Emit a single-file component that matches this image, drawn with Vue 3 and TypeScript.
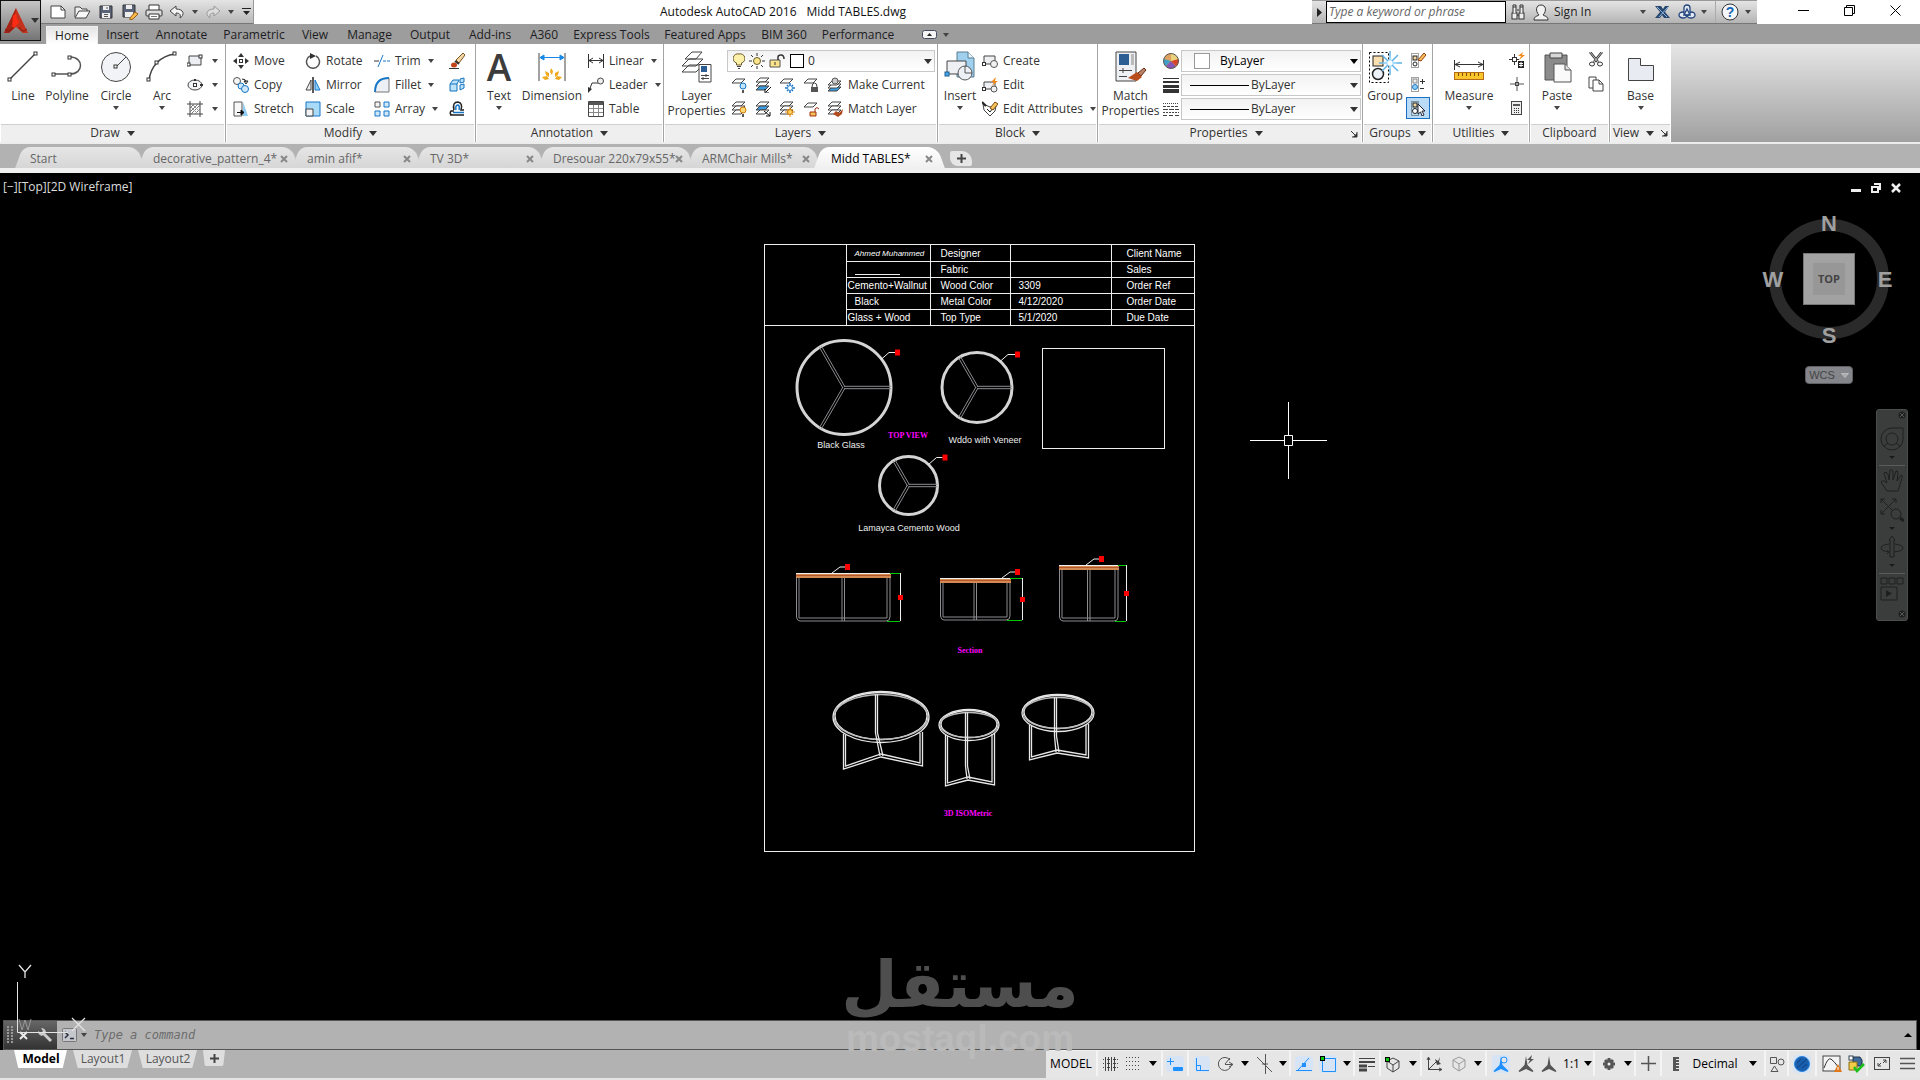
<script setup lang="ts">
import { h, ref } from 'vue'

type Glyph = [number, number, string]

const sq = (x: number, y: number) => `<rect x="${x}" y="${y}" width="3" height="3" fill="#fff" stroke="#333"/>`
const sheet = (y: number, fill = '#fff') => `<path d="M1 ${y + 4}L5 ${y}H14L10 ${y + 4}Z" fill="${fill}" stroke="#444"/>`
const annoFig = (c: string) => `<path d="M9 1l1.500 9 6 6-1 1-6.500-3-6.500 3-1-1 6-6z" fill="${c}"/>`

const glyphs: Record<string, Glyph> = {
  dn: [8, 5, '<path d="M0 0H8L4 5Z" fill="#333"/>'],
  sm: [6, 4, '<path d="M0 0H6L3 4Z" fill="#444"/>'],
  bk: [8, 5, '<path d="M0 0H8L4 5Z" fill="#000"/>'],
  logo: [24, 26, '<path d="M12 0L24 25H19L12 19 5 25H0Z" fill="#c4321e"/><path d="M12 0L10 20 5 25H0Z" fill="#a32415"/><path d="M9 8l3-3 1 6 2 3-4 5-3 1z" fill="#ff2a12"/><path d="M1 21q5 5 8-2M23 21q-5 5-8-2" stroke="#7e1a10" fill="none"/>'],
  new: [16, 14, '<path d="M1 1H11L15 5V13H1Z" fill="#fff" stroke="#444"/><path d="M11 1V5H15" fill="none" stroke="#444"/>'],
  open: [17, 14, '<path d="M1 12V2H6L8 4H13V6" fill="#eee" stroke="#444"/><path d="M1 13L5 6H16L12 13Z" fill="#f8f8f8" stroke="#444"/>'],
  save: [14, 14, '<path d="M1 1H13V13H1Z" fill="#5a6378" stroke="#333"/><path d="M4 1H10V5H4ZM3 8H11V13H3Z" fill="#eee"/><path d="M8 2v2M5 9.500h4M5 11.500h4" stroke="#555"/>'],
  saveas: [17, 16, '<path d="M1 1H13V13H1Z" fill="#5a6378" stroke="#333"/><path d="M4 1H10V5H4ZM3 8H11V13H3Z" fill="#eee"/><path d="M8 14L13 8 16 10 11 15 8 16Z" fill="#f6b94a" stroke="#9a5a10"/>'],
  print: [18, 16, '<path d="M4 6V1H14V6" fill="#fff" stroke="#333"/><rect x="1" y="6" width="16" height="6" rx="1" fill="#ddd" stroke="#333"/><path d="M4 10H14V15H4Z" fill="#fff" stroke="#333"/><path d="M6 12.500h6" stroke="#777"/>'],
  undo: [16, 14, '<path d="M7 1L1 6 7 11V8C11 8 12 10 11 13 16 10 15 4 7 4Z" fill="#f4f4f4" stroke="#444"/>'],
  redo: [16, 14, '<path d="M9 1L15 6 9 11V8C5 8 4 10 5 13 0 10 1 4 9 4Z" fill="#ddd" stroke="#999"/>'],
  qat: [9, 7, '<path d="M0 .5H9" stroke="#222"/><path d="M1 3H8L4.500 7Z" fill="#222"/>'],
  right: [5, 9, '<path d="M0 0L5 4.500 0 9Z" fill="#222"/>'],
  bino: [14, 16, '<g fill="#eee" stroke="#333"><rect x="1" y="9" width="5" height="6"/><rect x="8" y="9" width="5" height="6"/><path d="M2 9V3H5V9M9 9V3H12V9M2 3V1H5V3M9 3V1H12V3M6 6h2M6 11h2"/></g>'],
  user: [16, 17, '<path d="M1 16C1 12 5 12 6 11 2 7 3 1 8 1S14 7 10 11C11 12 15 12 15 16Z" fill="#f2f2f2" stroke="#333"/>'],
  xchg: [15, 14, '<path d="M0 1H6L8 4 10 1H14L10 7 15 13H9L7 10 5 13H0L5 7Z" fill="#27476e"/><path d="M2 2L12 12M13 2L4 12" stroke="#8fb5dd"/>'],
  a360: [18, 16, '<g fill="#e4e8f0" stroke="#23457e" stroke-width="1.300"><ellipse cx="5" cy="11" rx="4" ry="3"/><ellipse cx="13" cy="11" rx="4" ry="3"/><path d="M6 10V4Q6 1 9 1T12 4V10L9 12Z"/><path d="M9 5L12 11H6Z" fill="none"/></g>'],
  help: [18, 18, '<circle cx="9" cy="9" r="8" fill="#f4f6fa" stroke="#333"/><text x="9" y="14" text-anchor="middle" font-family="Liberation Sans" font-weight="700" font-size="14" fill="#1766b5">?</text>'],
  wmin: [11, 11, '<path d="M0 5.500H11" stroke="#000"/>'],
  wmax: [11, 11, '<path d="M.5 2.500H8.500V10.500H.5ZM2.500 2V.5H10.500V8.500H9" fill="none" stroke="#000"/>'],
  wclose: [11, 11, '<path d="M.5 .5L10.500 10.500M10.500 .5L.5 10.500" stroke="#000"/>'],
  ribmin: [15, 9, '<rect x=".5" y=".5" width="14" height="8" rx="2" fill="#f5f5f5" stroke="#444c60"/><path d="M5 6L7.500 3 10 6Z" fill="#222"/>'],
  line: [32, 32, `<path d="M3 28L28 3" stroke="#444" stroke-width="1.500"/>${sq(1, 27)}${sq(27, 1)}`],
  poly: [32, 32, `<path d="M3 23H19C33 23 33 6 19 6" fill="none" stroke="#555" stroke-width="1.500"/>${sq(1, 22)}${sq(17, 22)}${sq(17, 5)}`],
  circle: [32, 32, `<circle cx="16" cy="16" r="14.500" fill="#f1f3f7" stroke="#444"/><path d="M16 16L26 6" stroke="#444"/>${sq(14, 14)}`],
  arc: [32, 32, `<path d="M3 29C5 15 14 5 29 3" fill="none" stroke="#444" stroke-width="1.500"/>${sq(1, 27)}${sq(9, 10)}${sq(27, 1)}`],
  rect: [16, 16, `<path d="M2 3H14V12H2Z" fill="#eceef4" stroke="#444"/>${sq(0, 10)}${sq(12, 2)}`],
  ellipse: [16, 16, '<ellipse cx="8" cy="8" rx="7" ry="5" fill="#f1f3f7" stroke="#444"/><rect x="6.500" y="6.500" width="3" height="3" fill="#fff" stroke="#333"/><rect x="7" y="2" width="2" height="2" fill="#333"/><rect x="13" y="7" width="3" height="2" fill="#333"/>'],
  hatch: [16, 16, '<path d="M3 0V16M13 0V16M0 3H16M0 13H16" stroke="#444"/><path d="M3 7L7 3M3 11L11 3M4 13L13 4M8 13L13 8" stroke="#777"/><path d="M3 5L11 13M5 3L13 11" stroke="#999"/>'],
  move: [16, 16, '<path d="M8 0L11 4H5ZM8 16L5 12H11ZM0 8L4 5V11ZM16 8L12 11V5Z" fill="#333"/><rect x="6.500" y="6.500" width="3" height="3" fill="#fff" stroke="#333"/>'],
  rotate: [16, 16, '<path d="M5 3A6.500 6.500 0 1 0 11 3" fill="none" stroke="#555" stroke-width="1.500"/><path d="M5 0L11 3 5 6Z" fill="#333"/>'],
  trim: [16, 16, '<path d="M0 8H5" stroke="#333"/><path d="M4 14L9 2" stroke="#1677c8"/><path d="M9 8H16" stroke="#1677c8" stroke-dasharray="3 1"/>'],
  erase: [16, 16, '<path d="M0 15.500H10" stroke="#333"/><path d="M7 7L14 0 16 2 10 10Z" fill="#f3d6a5" stroke="#7a5320"/><ellipse cx="5" cy="12" rx="3" ry="2.500" fill="#c1431c"/><path d="M6 8L10 11" stroke="#333" stroke-width="2"/>'],
  copy: [16, 16, '<circle cx="4" cy="4" r="3.500" fill="#f5f5f5" stroke="#555"/><path d="M9 2Q13 2 13 5M11 4L13 7 15 4Z" fill="none" stroke="#222"/><circle cx="8" cy="9" r="3" fill="#cfe8fa" stroke="#1677c8"/><circle cx="12" cy="12" r="3.500" fill="#cfe8fa" stroke="#1677c8"/>'],
  mirror: [16, 16, '<path d="M8 0V16" stroke="#222" stroke-width="1.500"/><path d="M6 3V13H1Z" fill="#f0f0f4" stroke="#444"/><path d="M10 3V13H15Z" fill="#8fcdf5" stroke="#1677c8"/>'],
  fillet: [16, 16, '<path d="M1 15C1 6 6 1 15 1V15Z" fill="#edf0f5"/><path d="M1 15C1 6 6 1 15 1" stroke="#1677c8" stroke-width="2" fill="none"/><path d="M1 15H15V1" fill="none" stroke="#777"/>'],
  explode: [16, 16, '<g fill="#bce3fa" stroke="#1473bd"><path d="M1 7H8V14H1ZM1 7L4 3H10L8 7"/><path d="M11 2L15 1V5L11 6ZM11 8L15 7V11L11 13Z"/></g>'],
  stretch: [16, 16, '<path d="M10 1L15 15H10Z" fill="#8fcdf5"/><path d="M1 1H9V15H1Z" fill="#f8f8f8" stroke="#555"/><path d="M4 11.500H10M8 9L11 11.500 8 14Z" stroke="#111"/>'],
  scale: [16, 16, '<path d="M1 1H15V15H1Z" fill="#a9daf7" stroke="#1677c8"/><path d="M1 8H8V15H1Z" fill="#f4f4f6" stroke="#444"/>'],
  array: [16, 16, '<path d="M1 1H6V6H1Z" fill="#f5f5f5" stroke="#555"/><path d="M10 1H15V6H10ZM1 10H6V15H1ZM10 10H15V15H10Z" fill="#cfe8fa" stroke="#1677c8"/>'],
  offset: [16, 16, '<path d="M5 9Q3 1 9 1 14 2 12 9H15M1 14H15M3 14Q0 13 2 10H5" fill="none" stroke="#222" stroke-width="1.500"/><path d="M7 9Q6 4 9 4 11 5 10 9M4 11.500H15" fill="none" stroke="#1677c8" stroke-width="1.500"/>'],
  dim: [32, 32, '<path d="M3 2V30M29 2V30" stroke="#444"/><path d="M4 6.500H28M8 4L4 6.500 8 9ZM24 4L28 6.500 24 9Z" stroke="#1688e6" fill="#1688e6"/><path d="M15 17l2 3-1 4-2-3zM9 20l4 2v4l-3-2zM23 20l-4 2v4l3-2zM6 26l5-1 2 3-4 1zM26 26l-5-1-2 3 4 1z" fill="#f0a81c"/>'],
  linear: [16, 16, '<path d="M.5 1V15M15.500 1V15M1 7.500H15M5 5L1 7.500 5 10M11 5L15 7.500 11 10" fill="none" stroke="#333"/>'],
  leader: [16, 16, '<path d="M1 14L4 6H10" fill="none" stroke="#333"/><path d="M0 16V10L4 12Z" fill="#333"/><circle cx="12.500" cy="4" r="3" fill="#f0f0f0" stroke="#444"/>'],
  table: [16, 16, '<path d="M.5 .5H15.500V15.500H.5Z" fill="#fff" stroke="#444"/><path d="M1 1H15V4H1Z" fill="#555"/><path d="M1 7.500H15M1 11.500H15M5.500 4V15M10.500 4V15" stroke="#888"/>'],
  layers: [32, 32, '<g fill="#fff" stroke="#444"><path d="M1 21L8 14H22L15 21ZM1 15L8 8H22L15 15ZM4 8L11 1H21L15 8Z"/><path d="M18 13.500H30V31H18Z"/></g><path d="M20 15H26V21H20Z" fill="#2c5e94"/><path d="M20 24.500H28M20 27.500H28M25 23V26M22 26V29" stroke="#444"/>'],
  bulb: [12, 16, '<path d="M6 1A4.500 4.500 0 0 1 8.500 10V12H3.500V10A4.500 4.500 0 0 1 6 1" fill="#fdf0a8" stroke="#6b5a2a"/><path d="M4 13.500H8M5 15.500H7" stroke="#444"/>'],
  sun: [16, 16, '<circle cx="8" cy="8" r="3.500" fill="#fbe68a" stroke="#6b5a2a"/><path d="M8 0V3M8 13V16M0 8H3M13 8H16M2 2L4 4M12 12L14 14M2 14L4 12M12 4L14 2" stroke="#333"/>'],
  unlock: [17, 16, '<path d="M1 7H11V14H1Z" fill="#fbe48a" stroke="#555"/><path d="M9 7V4Q9 2 12 2T15 6" fill="none" stroke="#333" stroke-width="1.500"/><path d="M6 9V12" stroke="#333"/>'],
  loff: [16, 16, `${sheet(2)}<circle cx="12" cy="9" r="3" fill="#bfe4fb" stroke="#1677c8"/><path d="M11 13H13V16H11Z" fill="#555"/>`],
  liso: [16, 16, `${sheet(1)}${sheet(5)}${sheet(9, '#3d9be0')}<path d="M16 10L11 15M10 12V16H14" stroke="#111" fill="none"/>`],
  lfrz: [16, 16, `${sheet(2)}<path d="M11 6V16M6 11H16M8 8L14 14M14 8L8 14" stroke="#1677c8" stroke-width="1.500"/><circle cx="11" cy="11" r="2" fill="#fff"/>`],
  llock: [16, 16, `${sheet(2)}<path d="M8 10H15V15H8Z" fill="#555"/><path d="M9 10Q9 6 11.500 6T14 10" fill="none" stroke="#444"/>`],
  lcur: [16, 16, `${sheet(10, '#3d9be0')}${sheet(7)}${sheet(4)}<circle cx="8" cy="4" r="3" fill="#ccc" stroke="#555"/>`],
  lon: [16, 16, `${sheet(1)}${sheet(5)}${sheet(9)}<circle cx="12" cy="9" r="3" fill="#ffd978" stroke="#d17a08"/><path d="M11 13H13V16H11Z" fill="#555"/>`],
  luniso: [16, 16, `${sheet(1)}${sheet(5, '#3d9be0')}${sheet(9)}<path d="M9 10L15 15M15 11V15H11" stroke="#111" fill="none"/>`],
  lthaw: [16, 16, `${sheet(1)}${sheet(5)}${sheet(9)}<path d="M11 6V16M6 11H16M8 8L14 14M14 8L8 14" stroke="#e08a10"/><circle cx="11" cy="11" r="2.500" fill="#ffd35a" stroke="#d17a08"/>`],
  lunlock: [16, 16, `${sheet(2)}<path d="M7 11H13V15H7Z" fill="#f2c056" stroke="#a3300e"/><path d="M12 11V8Q14 5 16 8" fill="none" stroke="#a3300e"/>`],
  lmatch: [16, 16, `${sheet(1)}${sheet(5)}${sheet(9)}<path d="M16 8L12 12 9 10 6 13 11 16 15 13Z" fill="#b14a1c"/>`],
  insert: [32, 32, '<path d="M13 1H24L30 7V26H13Z" fill="#9fd0ee" stroke="#5b7c92"/><path d="M24 1V7H30" fill="#e5f3fb" stroke="#5b7c92"/><path d="M3 10H22V23H3Z" fill="#eef0f4" stroke="#444"/><circle cx="21" cy="22" r="7" fill="#edf0f5" stroke="#555"/><path d="M21 22V15M21 22H28" stroke="#555"/><rect x="1" y="21" width="4" height="4" fill="#48a8ea" stroke="#1a5f95"/>'],
  create: [16, 16, '<path d="M2 3H13V11H2Z" fill="#eef0f4" stroke="#444"/><circle cx="12" cy="11" r="3.500" fill="#f1f1f1" stroke="#555"/><rect x=".5" y="9.500" width="3" height="3" fill="#fff" stroke="#333"/>'],
  edit: [16, 16, '<path d="M2 5H13V12H2Z" fill="#eef0f4" stroke="#444"/><circle cx="12" cy="12" r="3" fill="#f1f1f1" stroke="#555"/><rect x=".5" y="10.500" width="3" height="3" fill="#fff" stroke="#333"/><path d="M14 0L9 5H12L10 9 16 4H13Z" fill="#f28a1a"/>'],
  attr: [16, 16, '<path d="M1 3L8 6 14 5 13 10 8 15 2 9Z" fill="#fff" stroke="#444"/><path d="M0 1L4 5" stroke="#222" stroke-width="2"/><path d="M5 8L8 11 14 3" fill="none" stroke="#222"/><path d="M8 7L13 1 16 3 11 9Z" fill="#f5c25a" stroke="#7a4a10"/>'],
  match: [32, 32, '<path d="M1 1H21V30H1Z" fill="#eef0f4" stroke="#444"/><path d="M4 3H14V14H4Z" fill="#2c5e94"/><path d="M16 3H19V14H16Z" fill="#bbb"/><path d="M4 19.500H17M4 25.500H12M8 17V22" stroke="#444"/><path d="M29 17L31 19 26 25 23 22Z" fill="#b7836a" stroke="#6b2c12"/><path d="M22 21L27 26 22 30 13 27Z" fill="#b84c1c"/>'],
  wheel: [16, 16, '<circle cx="8" cy="8" r="7.500" fill="#e9b93c"/><path d="M8 8V.5A7.500 7.500 0 0 0 1 6Z" fill="#e0a060"/><path d="M8 8L1 6Q0 11 3 13Z" fill="#3f9fc9"/><path d="M8 8L3 13Q8 18 13 13Z" fill="#8756b5"/><path d="M8 8L13 13Q17 9 15 6Z" fill="#d8442c"/><path d="M8 8L15 6Q13 1 8 .5Z" fill="#e9d27c"/><circle cx="8" cy="8" r="7.500" fill="none" stroke="#555"/>'],
  lw: [16, 16, '<path d="M0 1.500H16" stroke="#333"/><path d="M0 5H16" stroke="#333" stroke-width="2"/><path d="M0 9.500H16" stroke="#333" stroke-width="3"/><path d="M0 14H16" stroke="#333" stroke-width="4"/>'],
  lt: [16, 16, '<g stroke="#444"><path d="M0 2.500H16" stroke-dasharray="1 1"/><path d="M0 5.500H16" stroke-dasharray="3 1"/><path d="M0 8.500H16" stroke-dasharray="5 1"/><path d="M0 11.500H16" stroke-dasharray="2 1"/><path d="M0 14.500H16" stroke-dasharray="4 2"/></g>'],
  group: [34, 32, '<path d="M1.500 1.500H20.500V31.500H1.500Z" fill="none" stroke="#000" stroke-dasharray="2 2"/><rect x="5" y="5" width="10" height="10" fill="#fce0b0" stroke="#222"/><circle cx="10" cy="23" r="5.500" fill="#eef3fa" stroke="#222" stroke-width="1.500"/><path d="M22 0V24M11 12H34M14 4L30 20M30 4L14 20" stroke="#5fb2e4" stroke-width="1.500"/><path d="M22 4L24 10 30 12 24 14 22 20 20 14 14 12 20 10Z" fill="#a5daf8"/><circle cx="22" cy="12" r="2.500" fill="#fff"/>'],
  gedit: [16, 16, '<path d="M1.500 1.500H8.500V15.500H1.500Z" fill="none" stroke="#444" stroke-dasharray="1 1"/><rect x="3" y="4" width="4" height="4" fill="#f3d7a0" stroke="#222"/><circle cx="5" cy="12" r="2" fill="#fff" stroke="#222"/><path d="M8 8L14 1 16 3 11 9Z" fill="#f5c25a" stroke="#9b3d10"/>'],
  gadd: [16, 16, '<path d="M1.500 1.500H8.500V15.500H1.500Z" fill="none" stroke="#444" stroke-dasharray="1 1"/><rect x="3" y="3" width="4" height="4" fill="#eee" stroke="#888"/><circle cx="5" cy="11" r="2.500" fill="#8fcdf5" stroke="#1677c8"/><path d="M10 5.500H15M12.500 3V8M10 12.500H14" stroke="#333"/>'],
  gsel: [16, 16, '<path d="M1.500 1.500H8.500V15.500H1.500Z" fill="none" stroke="#444" stroke-dasharray="1 1"/><rect x="3" y="3" width="4" height="4" fill="#f3d7a0" stroke="#222"/><circle cx="5" cy="11" r="2.500" fill="#fff" stroke="#222"/><path d="M8 4V14L10.500 12 12 16 14 15 12 11H15Z" fill="#fff" stroke="#223"/>'],
  measure: [32, 32, '<path d="M1.500 9V19M30.500 9V19M2 13.500H30M7 11L2 13.500 7 16M25 11L30 13.500 25 16" fill="none" stroke="#333"/><rect x="1.500" y="21.500" width="29" height="7" fill="#f8c62c" stroke="#b56c14"/><path d="M5.500 22V25M9.500 22V25M13.500 22V25M17.500 22V25M21.500 22V25M25.500 22V25" stroke="#7a4a10"/>'],
  qsel: [16, 16, '<path d="M0 7.500H10M5.500 2V13" stroke="#333"/><rect x="3.500" y="5.500" width="4" height="4" fill="#fff" stroke="#333"/><path d="M14 0L9 4H12L10 8 16 3H13Z" fill="#f28a1a"/><path d="M9 9H15V16H9Z" fill="#222"/><path d="M10 11.500H14M10 13.500H14M12 10V15" stroke="#fff"/>'],
  point: [14, 14, '<path d="M0 7H14M7 0V14" stroke="#555"/><rect x="5.500" y="5.500" width="3" height="3" fill="#aaa" stroke="#444"/>'],
  calc: [12, 16, '<rect x=".5" y="1.500" width="10" height="13" fill="#eee" stroke="#444"/><path d="M2 4H9V6H2Z" fill="#555"/><path d="M3 8.500H9M3 10.500H9M3 12.500H9" stroke="#333" stroke-dasharray="1 1"/>'],
  paste: [32, 32, '<path d="M4 4H26V29H4Z" fill="#8b8b8b" stroke="#555"/><path d="M9 2H21V7H9Z" fill="#d8d8d8" stroke="#444"/><path d="M13 13H24L30 19V31H13Z" fill="#fafafa" stroke="#555"/><path d="M24 13V19H30" fill="#ddd" stroke="#555"/>'],
  cut: [16, 16, '<path d="M2 0L10 10M14 0L6 10" stroke="#333" stroke-width="2.500"/><path d="M2 0L10 10M14 0L6 10" stroke="#eee" stroke-width=".8"/><ellipse cx="4" cy="12" rx="2.500" ry="2" fill="#fff" stroke="#333"/><ellipse cx="12" cy="12" rx="2.500" ry="2" fill="#fff" stroke="#333"/>'],
  copyclip: [16, 16, '<path d="M1 1H8V12H1Z" fill="#fff" stroke="#444"/><path d="M5 4H11L15 8V15H5Z" fill="#fff" stroke="#444"/><path d="M11 4V8H15" fill="none" stroke="#444"/>'],
  base: [28, 32, '<path d="M1.500 7.500H13.500V14.500H26.500V29.500H1.500Z" fill="#e8ebf2" stroke="#444"/>'],
  launch: [7, 7, '<path d="M0 0L5 5M6 1V6H1" fill="none" stroke="#333"/><path d="M6 2V6H2Z" fill="#333"/>'],
  x: [8, 8, '<path d="M1 1L7 7M7 1L1 7" stroke="#888" stroke-width="2"/>'],
  plus: [9, 9, '<path d="M4.500 0V9M0 4.500H9" stroke="#444" stroke-width="2"/>'],
  grid: [16, 16, '<path d="M3.500 1V15M6.500 1V15M9.500 1V15M12.500 1V15" stroke="#444"/><path d="M1 3.500H16M1 7.500H16M1 11.500H16" stroke="#444" stroke-dasharray="1 1"/>'],
  snap: [16, 16, '<path d="M1 1.500H16M1 5.500H16M1 9.500H16M1 13.500H16" stroke="#444" stroke-dasharray="1 2"/>'],
  dyn: [18, 16, '<path d="M1 5.500H8M4.500 2V9" stroke="#1e90ff"/><rect x="7" y="11" width="10" height="4" rx="1" fill="#1e90ff"/>'],
  ortho: [16, 16, '<path d="M2.500 2V14.500H15M2 9.500H6.500V14" fill="none" stroke="#1e90ff"/>'],
  polar: [16, 16, '<path d="M12 4A6.500 6.500 0 1 0 13 10M7 8L12 2M7 8.500H15M11 6L15 8.500 11 11" fill="none" stroke="#555"/>'],
  iso: [18, 20, '<path d="M1 3L16 18M9.500 0V20M6 10H12" stroke="#555"/>'],
  otrack: [18, 16, '<path d="M1 14.500H17M3 14L14 2" fill="none" stroke="#1e90ff"/><rect x="7" y="7" width="4" height="4" fill="#1e90ff"/>'],
  osnap: [18, 18, '<path d="M5 3.500H16.500V16.500H3.500V6" fill="none" stroke="#1e90ff"/><rect x="1.500" y="1.500" width="4" height="4" fill="#0ac80a" stroke="#000"/>'],
  lwt: [16, 16, '<path d="M0 2.500H16" stroke="#444"/><path d="M0 6H16" stroke="#444" stroke-width="2"/><path d="M0 10H8" stroke="#444" stroke-width="3"/><path d="M9 10.500H16" stroke="#444"/><path d="M0 14H8" stroke="#444" stroke-width="3"/>'],
  osnap3: [18, 18, '<path d="M9 3L15 6V13L9 17 3 13V6ZM3 6L9 10 15 6M9 10V17" fill="none" stroke="#444"/><rect x="1.500" y="2.500" width="4" height="4" fill="#0ac80a" stroke="#000"/>'],
  ducs: [16, 16, '<path d="M2.500 2V13.500H15M2 14L10 6M1 4L2.500 1 4 4M13 12L16 13.500 13 15" fill="none" stroke="#444"/><path d="M9 3L12 5 14 1 13 6 15 8 11 9Z" fill="#444"/>'],
  cube: [16, 16, '<path d="M8 1L14 4V11L8 15 2 11V4ZM2 4L8 8 14 4M8 8V15" fill="none" stroke="#999"/>'],
  anno1: [18, 18, annoFig('#1e90ff') + '<circle cx="12" cy="5" r="3" fill="#e6e6e6" stroke="#1e90ff"/>'],
  anno2: [18, 18, annoFig('#555') + '<path d="M15 0L10 5H13L11 9 17 4H14Z" fill="#555"/>'],
  anno3: [18, 18, annoFig('#555')],
  gear: [14, 14, '<path d="M7 1V13M1 7H13M3 3L11 11M11 3L3 11" stroke="#555" stroke-width="3"/><circle cx="7" cy="7" r="3" fill="#eee" stroke="#555" stroke-width="3"/>'],
  bigplus: [15, 15, '<path d="M7.500 0V15M0 7.500H15" stroke="#555" stroke-width="1.500"/>'],
  ruler: [6, 14, '<path d="M0 0H6V2H3V3H6V5H3V6H6V8H3V9H6V11H3V12H6V14H0Z" fill="#555"/>'],
  shapes: [16, 16, '<path d="M1.500 1.500H7.500V7.500H1.500ZM5.500 10L9 15.500H2Z" fill="none" stroke="#555"/><circle cx="12" cy="6" r="3" fill="none" stroke="#555"/>'],
  ball: [18, 18, '<circle cx="9" cy="9" r="7.500" fill="#1a5fae" stroke="#2b84dd"/><path d="M4 13L14 4M4 8L8 4M9 13L14 9" stroke="#0c4180"/>'],
  wave: [20, 18, '<rect x="1" y="1" width="17" height="15" fill="#f4f4f4" stroke="#444"/><path d="M2 13Q6 2 9 4T17 13" fill="none" stroke="#333"/><path d="M16 9L20 17H12Z" fill="#e07818"/><path d="M16 12V15" stroke="#fff"/>'],
  dwg: [17, 18, '<path d="M5 2H12L14 5V11H5Z" fill="#3f6b9c" stroke="#234"/><path d="M1 7H9V15H1Z" fill="#f3cd49" stroke="#8a6d14"/><rect x="1" y="1" width="4" height="4" fill="#fff" stroke="#345"/><path d="M6 12L9 16 16 9" fill="none" stroke="#1bc01b" stroke-width="2.500"/>'],
  clean: [16, 13, '<rect x=".5" y=".5" width="15" height="12" fill="none" stroke="#444"/><path d="M4 9L7 6M4 6V9H7M12 3L9 6M9 3H12V6" fill="none" stroke="#444"/>'],
  menu: [15, 13, '<path d="M0 1.500H15M0 6.500H15M0 11.500H15" stroke="#555" stroke-width="1.500"/>'],
  dmin: [10, 10, '<rect y="6" width="10" height="3" fill="#eee"/>'],
  dmax: [10, 10, '<path d="M1 4H7V9H1ZM3 1H9V7" fill="none" stroke="#eee" stroke-width="2"/>'],
  dclose: [10, 10, '<path d="M1 1L9 9M9 1L1 9" stroke="#eee" stroke-width="2.500"/>'],
  wheelnav: [24, 24, '<path d="M12 1H23V12A11 11 0 1 1 12 1Z" fill="none" stroke="#1f1f1f"/><circle cx="12" cy="12" r="6" fill="none" stroke="#1f1f1f"/><path d="M4 19L8 16M16 16L20 19" stroke="#1f1f1f"/>'],
  pan: [24, 24, '<path d="M7 22L1 13Q3 10 7 14L4 4Q6 2 8 5L9 11 10 1Q12 0 13 2V11L16 2Q18 1 18 4L17 12 21 6Q23 6 22 9L18 22Z" fill="none" stroke="#1f1f1f"/>'],
  zoomx: [24, 24, '<path d="M1 1L16 16M16 1L1 16M1 5V1H5M12 1H16V5M1 12V16H5" fill="none" stroke="#1f1f1f"/><circle cx="16" cy="16" r="5" fill="#3b3d3d" stroke="#1f1f1f"/><path d="M20 20L24 23" stroke="#1f1f1f" stroke-width="3"/>'],
  orbit: [24, 24, '<path d="M12 1L15 5H14V22H10V5H9Z" fill="none" stroke="#1f1f1f"/><path d="M9 9Q1 10 1 13T9 17L7 15M7 19L9 17M15 9Q23 10 23 13T14 17" fill="none" stroke="#1f1f1f"/>'],
  motion: [24, 24, '<path d="M1 1H7V7H1ZM9 1H15V7H9ZM17 1H23V7H17ZM1 10H17V23H1Z" fill="none" stroke="#1f1f1f"/><path d="M6 13L12 16.500 6 20Z" fill="#1f1f1f"/>'],
  ndot: [8, 8, '<circle cx="4" cy="4" r="3.500" fill="#202020"/><path d="M2 2L6 6M6 2L2 6" stroke="#555"/>'],
  ndown: [6, 3, '<path d="M0 0H6L3 3Z" fill="#1a1a1a"/>'],
  grip: [6, 18, '<path d="M1 0V18M5 0V18" stroke="#999" stroke-width="2" stroke-dasharray="2 1"/>'],
  cx: [9, 9, '<path d="M1 1L8 8M8 1L1 8" stroke="#eee" stroke-width="2"/>'],
  wrench: [15, 15, '<path d="M5 5L13 13" stroke="#ccc" stroke-width="3"/><path d="M3 0L5 3 3 5 0 3Q0 7 4 8L8 4Q7 0 3 0Z" fill="#ccc"/>'],
  prompt: [15, 14, '<rect x=".5" y=".5" width="14" height="13" rx="1" fill="#c4c7cc" stroke="#777"/><path d="M3 4L6 7 3 10M8 10.500H12" fill="none" stroke="#2a3040" stroke-width="1.500"/>'],
  up: [8, 4, '<path d="M0 4H8L4 0Z" fill="#000"/>'],
}

const Icon = (p: { n: string }) => {
  const [w, ht, body] = glyphs[p.n]
  return h('svg', { class: 'ico', width: w, height: ht, viewBox: `0 0 ${w} ${ht}`, 'aria-hidden': 'true', innerHTML: body })
}
Icon.props = ['n']

const quick = [
  ['new', 'New', 24], ['open', 'Open', 24], ['save', 'Save', 24], ['saveas', 'Save As', 24], ['print', 'Plot', 24],
  ['undo', 'Undo', 22], ['sm', 'Undo list', 14], ['redo', 'Redo', 22], ['sm', 'Redo list', 14], ['qat', 'Customize', 16],
] as [string, string, number][]

const menuTabs = [
  ['Home', 52], ['Insert', 49], ['Annotate', 69], ['Parametric', 76], ['View', 46], ['Manage', 63], ['Output', 58],
  ['Add-ins', 62], ['A360', 46], ['Express Tools', 89], ['Featured Apps', 98], ['BIM 360', 60], ['Performance', 88],
] as [string, number][]

interface Tool { i: string; t?: string; a?: boolean }
const drawBig: Tool[] = [{ i: 'line', t: 'Line' }, { i: 'poly', t: 'Polyline' }, { i: 'circle', t: 'Circle', a: true }, { i: 'arc', t: 'Arc', a: true }]
const modify: Tool[] = [
  { i: 'move', t: 'Move' }, { i: 'rotate', t: 'Rotate' }, { i: 'trim', t: 'Trim', a: true }, { i: 'erase' },
  { i: 'copy', t: 'Copy' }, { i: 'mirror', t: 'Mirror' }, { i: 'fillet', t: 'Fillet', a: true }, { i: 'explode' },
  { i: 'stretch', t: 'Stretch' }, { i: 'scale', t: 'Scale' }, { i: 'array', t: 'Array', a: true }, { i: 'offset' },
]
const annot: Tool[] = [{ i: 'linear', t: 'Linear', a: true }, { i: 'leader', t: 'Leader', a: true }, { i: 'table', t: 'Table' }]
const layerTools: Tool[] = [
  { i: 'loff' }, { i: 'liso' }, { i: 'lfrz' }, { i: 'llock' }, { i: 'lcur', t: 'Make Current' },
  { i: 'lon' }, { i: 'luniso' }, { i: 'lthaw' }, { i: 'lunlock' }, { i: 'lmatch', t: 'Match Layer' },
]
const block: Tool[] = [{ i: 'create', t: 'Create' }, { i: 'edit', t: 'Edit' }, { i: 'attr', t: 'Edit Attributes', a: true }]

const files = [
  { name: 'Start', w: 123, fixed: true }, { name: 'decorative_pattern_4*', w: 154 }, { name: 'amin afif*', w: 123 },
  { name: 'TV 3D*', w: 123 }, { name: 'Dresouar 220x79x55*', w: 149 }, { name: 'ARMChair Mills*', w: 127 }, { name: 'Midd TABLES*', w: 123 },
]
const activeFile = ref('Midd TABLES*')
const layouts = ['Model', 'Layout1', 'Layout2']
const activeLayout = ref('Model')

const titleBlock = [
  ['Ahmed Muhammed', 'Designer', '', 'Client Name'],
  ['', 'Fabric', '', 'Sales'],
  ['Cemento+Wallnut', 'Wood Color', '3309', 'Order Ref'],
  ['Black', 'Metal Color', '4/12/2020', 'Order Date'],
  ['Glass + Wood', 'Top Type', '5/1/2020', 'Due Date'],
]

const spoke = (r: number, deg: number) => {
  const a = (deg * Math.PI) / 180
  const c = Math.cos(a)
  const s = Math.sin(a)
  const side = (k: number) => `M${(-s * k).toFixed(1)} ${(c * k).toFixed(1)}L${(c * r - s * k).toFixed(1)} ${(s * r + c * k).toFixed(1)}`
  return side(1.2) + side(-1.2)
}
const plans = [
  { x: 80, y: 143.5, r: 47, px: 37, py: -28, ex: 51, ey: -35 },
  { x: 213, y: 143.5, r: 35, px: 23, py: -26, ex: 38, ey: -33 },
  { x: 144.5, y: 241.5, r: 29, px: 20, py: -21, ex: 34, ey: -28 },
]
const sections = [
  { x: 32, y: 333, w: 94, b: 377, lx: 68, dx: 136 },
  { x: 176, y: 338, w: 70, b: 376, lx: 238, dx: 258 },
  { x: 295, y: 325, w: 59, b: 377, lx: 322, dx: 362 },
]
const isos = [
  { cx: 117, cy: 473, rx: 48, ry: 25.5, l: 79, r: 158, lt: 490, lb: 525, rt: 488, rb: 522, m: 112, mb: 489, hx: 117, hy: 512 },
  { cx: 205, cy: 481, rx: 30, ry: 15.5, l: 181, r: 230, lt: 491, lb: 542, rt: 489, rb: 541, m: 202, mb: 522, hx: 204, hy: 535 },
  { cx: 294, cy: 469, rx: 36, ry: 18.5, l: 265, r: 324, lt: 481, lb: 516, rt: 480, rb: 514, m: 291, mb: 492, hx: 293, hy: 508 },
]

interface Cell { i?: string; t?: string; w: number; s?: boolean; glow?: boolean }
const status: Cell[] = [
  { t: 'MODEL', w: 52, s: true }, { i: 'grid', w: 24 }, { i: 'snap', w: 22 }, { i: 'bk', w: 19, s: true },
  { i: 'dyn', w: 26, s: true, glow: true }, { i: 'ortho', w: 26, glow: true }, { i: 'polar', w: 21 }, { i: 'bk', w: 18 },
  { i: 'iso', w: 22 }, { i: 'bk', w: 15, s: true }, { i: 'otrack', w: 25, glow: true }, { i: 'osnap', w: 24, glow: true },
  { i: 'bk', w: 15, s: true }, { i: 'lwt', w: 26, s: true }, { i: 'osnap3', w: 24 }, { i: 'bk', w: 17, s: true },
  { i: 'ducs', w: 24 }, { i: 'cube', w: 25 }, { i: 'bk', w: 16, s: true }, { i: 'anno1', w: 27, glow: true },
  { i: 'anno2', w: 23 }, { i: 'anno3', w: 23 }, { t: '1:1', w: 23 }, { i: 'bk', w: 12, s: true }, { i: 'gear', w: 27 },
  { i: 'bk', w: 14, s: true }, { i: 'bigplus', w: 26, s: true }, { i: 'ruler', w: 27 }, { t: 'Decimal', w: 52 },
  { i: 'bk', w: 25, s: true }, { i: 'shapes', w: 23, s: true }, { i: 'ball', w: 28, s: true, glow: true }, { i: 'wave', w: 29 },
  { i: 'dwg', w: 22, s: true }, { i: 'clean', w: 27 }, { i: 'menu', w: 25 },
]
</script>

<template>
  <div class="cad">
    <header class="top">
      <button class="appbtn" aria-label="Application menu"><Icon n="logo" /><Icon n="dn" /></button>
      <div class="titlebar">
        <div class="quick">
          <button v-for="(q, k) in quick" :key="k" :aria-label="q[1]" :style="{ width: q[2] + 'px' }"><Icon :n="q[0]" /></button>
        </div>
        <div class="title"><span>Autodesk AutoCAD 2016</span><span>Midd TABLES.dwg</span></div>
        <div class="info">
          <button class="w14" aria-label="Collapse search"><Icon n="right" /></button>
          <input type="text" placeholder="Type a keyword or phrase" aria-label="Search help" />
          <button class="w24" aria-label="Search"><Icon n="bino" /></button>
          <button class="sign"><Icon n="user" /><span>Sign In</span><Icon n="sm" /></button>
          <button class="w24" aria-label="Exchange"><Icon n="xchg" /></button>
          <button class="w36" aria-label="A360"><Icon n="a360" /><Icon n="sm" /></button>
          <button class="w40 line" aria-label="Help"><Icon n="help" /><Icon n="sm" /></button>
        </div>
        <div class="win">
          <button aria-label="Minimize"><Icon n="wmin" /></button>
          <button aria-label="Restore"><Icon n="wmax" /></button>
          <button aria-label="Close"><Icon n="wclose" /></button>
        </div>
      </div>
      <nav class="menu">
        <button v-for="(m, k) in menuTabs" :key="m[0]" :class="{ on: k === 0 }" :style="{ width: m[1] + 'px' }">{{ m[0] }}</button>
        <button class="mini" aria-label="Minimize ribbon"><Icon n="ribmin" /><Icon n="sm" /></button>
      </nav>
    </header>

    <section class="ribbon">
      <div class="panel draw">
        <div class="body">
          <button v-for="b in drawBig" :key="b.i" class="big" :class="'b-' + b.i"><Icon :n="b.i" /><span>{{ b.t }}</span><Icon v-if="b.a" n="sm" /></button>
          <div class="col">
            <button v-for="i in ['rect', 'ellipse', 'hatch']" :key="i" class="small split" :aria-label="i"><Icon :n="i" /><Icon n="sm" /></button>
          </div>
        </div>
        <footer>Draw<Icon n="dn" /></footer>
      </div>

      <div class="panel modify">
        <div class="body modgrid">
          <button v-for="b in modify" :key="b.i" class="small" :aria-label="b.t || b.i"><Icon :n="b.i" /><span v-if="b.t">{{ b.t }}</span><Icon v-if="b.a" n="sm" /></button>
        </div>
        <footer>Modify<Icon n="dn" /></footer>
      </div>

      <div class="panel annotation">
        <div class="body">
          <button class="big b-text"><b class="letter">A</b><span>Text</span><Icon n="sm" /></button>
          <button class="big b-dim"><Icon n="dim" /><span>Dimension</span></button>
          <div class="col">
            <button v-for="b in annot" :key="b.i" class="small"><Icon :n="b.i" /><span>{{ b.t }}</span><Icon v-if="b.a" n="sm" /></button>
          </div>
        </div>
        <footer>Annotation<Icon n="dn" /></footer>
      </div>

      <div class="panel layer">
        <div class="body">
          <button class="big b-layer"><Icon n="layers" /><span>Layer<br />Properties</span></button>
          <div class="col grow">
            <label class="combo layers"><Icon n="bulb" /><Icon n="sun" /><Icon n="unlock" /><i class="swatch"></i>
              <select aria-label="Layer"><option>0</option></select><Icon n="dn" /></label>
            <div class="laygrid">
              <button v-for="b in layerTools" :key="b.i" class="small" :aria-label="b.t || b.i"><Icon :n="b.i" /><span v-if="b.t">{{ b.t }}</span></button>
            </div>
          </div>
        </div>
        <footer>Layers<Icon n="dn" /></footer>
      </div>

      <div class="panel block">
        <div class="body">
          <button class="big b-insert"><Icon n="insert" /><span>Insert</span><Icon n="sm" /></button>
          <div class="col">
            <button v-for="b in block" :key="b.i" class="small"><Icon :n="b.i" /><span>{{ b.t }}</span><Icon v-if="b.a" n="sm" /></button>
          </div>
        </div>
        <footer>Block<Icon n="dn" /></footer>
      </div>

      <div class="panel props">
        <div class="body">
          <button class="big b-match"><Icon n="match" /><span>Match<br />Properties</span></button>
          <div class="col grow">
            <div class="prop"><Icon n="wheel" /><label class="combo"><i class="swatch wide"></i><select class="dark" aria-label="Color"><option>ByLayer</option></select><Icon n="bk" /></label></div>
            <div class="prop"><Icon n="lw" /><label class="combo"><i class="rule"></i><select aria-label="Lineweight"><option>ByLayer</option></select><Icon n="dn" /></label></div>
            <div class="prop"><Icon n="lt" /><label class="combo"><i class="rule"></i><select aria-label="Linetype"><option>ByLayer</option></select><Icon n="dn" /></label></div>
          </div>
        </div>
        <footer class="left">Properties<Icon n="dn" /><Icon n="launch" class="launch" /></footer>
      </div>

      <div class="panel groups">
        <div class="body">
          <button class="big b-group"><Icon n="group" /><span>Group</span></button>
          <div class="col">
            <button class="small sqr" aria-label="Edit group"><Icon n="gedit" /></button>
            <button class="small sqr" aria-label="Add or remove"><Icon n="gadd" /></button>
            <button class="small sqr pressed" aria-label="Group selection"><Icon n="gsel" /></button>
          </div>
        </div>
        <footer>Groups<Icon n="dn" /></footer>
      </div>

      <div class="panel utils">
        <div class="body">
          <button class="big b-measure"><Icon n="measure" /><span>Measure</span><Icon n="sm" /></button>
          <div class="col">
            <button v-for="i in ['qsel', 'point', 'calc']" :key="i" class="small sqr" :aria-label="i"><Icon :n="i" /></button>
          </div>
        </div>
        <footer>Utilities<Icon n="dn" /></footer>
      </div>

      <div class="panel clip">
        <div class="body">
          <button class="big b-paste"><Icon n="paste" /><span>Paste</span><Icon n="sm" /></button>
          <div class="col">
            <button class="small sqr" aria-label="Cut"><Icon n="cut" /></button>
            <button class="small sqr" aria-label="Copy clip"><Icon n="copyclip" /></button>
          </div>
        </div>
        <footer>Clipboard</footer>
      </div>

      <div class="panel view">
        <div class="body"><button class="big b-base"><Icon n="base" /><span>Base</span><Icon n="sm" /></button></div>
        <footer>View<Icon n="dn" /><Icon n="launch" /></footer>
      </div>
    </section>

    <nav class="files">
      <div v-for="f in files" :key="f.name" class="file" :class="{ on: f.name === activeFile }" :style="{ width: f.w + 'px' }">
        <button class="name" @click="activeFile = f.name">{{ f.name }}</button>
        <button v-if="!f.fixed" class="close" aria-label="Close drawing"><Icon n="x" /></button>
      </div>
      <button class="add" aria-label="New drawing"><Icon n="plus" /></button>
    </nav>

    <main class="space">
      <div class="viewlabel"><button>[−]</button><button>[Top]</button><button>[2D Wireframe]</button></div>
      <div class="docwin">
        <button aria-label="Minimize drawing"><Icon n="dmin" /></button>
        <button aria-label="Restore drawing"><Icon n="dmax" /></button>
        <button aria-label="Close drawing"><Icon n="dclose" /></button>
      </div>

      <div class="sheet">
        <table>
          <tbody>
            <tr v-for="(r, k) in titleBlock" :key="k">
              <td v-if="k === 0" rowspan="5" class="c0"></td>
              <td class="c1" :class="{ tight: k === 2 || k === 4, hand: k === 0 }"><u v-if="k === 1"></u>{{ r[0] }}</td>
              <td class="c2">{{ r[1] }}</td>
              <td class="c3">{{ r[2] }}</td>
              <td class="c4">{{ r[3] }}</td>
            </tr>
          </tbody>
        </table>
        <svg class="model" width="431" height="608" viewBox="0 0 431 608" fill="none">
          <g v-for="p in plans" :key="p.x" :transform="`translate(${p.x} ${p.y})`">
            <circle :r="p.r" stroke="#d4d4d4" stroke-width="3" />
            <path :d="spoke(p.r, 0) + spoke(p.r, 120) + spoke(p.r, 240)" stroke="#8c8c90" />
            <path :d="`M${p.px} ${p.py}L${p.px + 8} ${p.ey}H${p.ex}`" stroke="#eee" />
            <rect :x="p.ex" :y="p.ey - 3" width="5" height="6" fill="#f00" />
          </g>
          <rect x="278.5" y="104.5" width="122" height="100" stroke="#eee" />
          <g v-for="s in sections" :key="s.x">
            <path :d="`M${s.x + .5} ${s.y}V${s.b - 4}Q${s.x + 1} ${s.b} ${s.x + 4} ${s.b}H${s.x + s.w - 4}Q${s.x + s.w} ${s.b} ${s.x + s.w} ${s.b - 4}V${s.y}M${s.x + 3} ${s.y}V${s.b - 3}H${s.x + s.w - 3}V${s.y}M${s.x + s.w / 2 - 1} ${s.y}V${s.b}M${s.x + s.w / 2 + 1.5} ${s.y}V${s.b}`" stroke="#8c8c90" />
            <rect :x="s.x" :y="s.y - 3" :width="s.w + 1" height="4" fill="#d08a52" />
            <path :d="`M${s.x} ${s.y - 1.5}h${s.w + 1}`" stroke="#b9552b" />
            <path :d="`M${s.x} ${s.y - 3.5}h${s.w + 1}M${s.lx} ${s.y - 4}l8 -6h6M${s.dx + .5} ${s.y - 4}V${s.b}`" stroke="#eee" />
            <path :d="`M${s.x + s.w} ${s.y - 3.5}H${s.dx}M${s.x + s.w - 3} ${s.b + .5}H${s.dx}`" stroke="#00c800" />
            <rect :x="s.lx + 13" :y="s.y - 13" width="5" height="6" fill="#f00" />
            <rect :x="s.dx - 2" :y="(s.y + s.b) / 2 - 4" width="5" height="5" fill="#f00" />
          </g>
          <g v-for="o in isos" :key="o.cx" stroke="#e8e8e8" stroke-width="1.3">
            <ellipse :cx="o.cx" :cy="o.cy" :rx="o.rx" :ry="o.ry" />
            <ellipse :cx="o.cx" :cy="o.cy - 1" :rx="o.rx - 2" :ry="o.ry - 2" />
            <ellipse :cx="o.cx" :cy="o.cy" :rx="o.rx - 1" :ry="o.ry - 3" stroke="#bbb" />
            <path :d="`M${o.l + .5} ${o.lt}V${o.lb}L${o.hx} ${o.hy + 1}L${o.r + .5} ${o.rb}V${o.rt}M${o.l + 2.5} ${o.lt + 1}V${o.lb - 3}L${o.hx} ${o.hy - 2}L${o.r - 2} ${o.rb - 3}V${o.rt + 1}`" />
            <path :d="`M${o.m - .5} ${o.cy - o.ry + 3}V${o.mb}L${o.hx - 1} ${o.hy}M${o.m + 1.5} ${o.cy - o.ry + 3}V${o.mb}L${o.hx + 2} ${o.hy}`" />
          </g>
          <g class="note">
            <text x="77" y="204">Black Glass</text>
            <text x="221" y="199">Wddo with Veneer</text>
            <text x="145" y="287">Lamayca Cemento Wood</text>
          </g>
          <g class="head">
            <text x="144" y="194">TOP VIEW</text>
            <text x="206" y="409">Section</text>
            <text x="204" y="572">3D ISOMetric</text>
          </g>
        </svg>
      </div>

      <svg class="cross" width="77" height="77" viewBox="0 0 77 77" fill="none" stroke="#fff"><path d="M38.500 0V33M38.500 44V77M0 38.500H34M43 38.500H77M34.500 33.500H42.500V43.500H34.500Z" /></svg>

      <div class="compass">
        <svg width="140" height="140" viewBox="0 0 140 140">
          <circle cx="70" cy="70" r="54" fill="none" stroke="#2a2a2a" stroke-width="12" />
          <rect x="44.500" y="44.500" width="51" height="51" fill="#a2a2a2" stroke="#777" />
          <rect x="54" y="54" width="32" height="32" fill="#979797" />
          <g font-family="Liberation Sans" font-weight="700" text-anchor="middle" fill="#a0a0a0" font-size="22">
            <text x="70" y="22">N</text><text x="70" y="134">S</text><text x="14" y="78">W</text><text x="126" y="78">E</text>
          </g>
          <text x="70" y="74" text-anchor="middle" font-family="Open Sans" font-weight="700" font-size="11" fill="#444">TOP</text>
        </svg>
        <button class="wcs">WCS<svg width="8" height="5" viewBox="0 0 8 5"><path d="M.5 .5H7.500L4 4.500Z" fill="#aaa" stroke="#bbb" /></svg></button>
      </div>

      <aside class="navbar">
        <Icon n="ndot" class="edge" />
        <button aria-label="Wheel"><Icon n="wheelnav" /><Icon n="ndown" /></button>
        <hr />
        <button aria-label="Pan"><Icon n="pan" /></button>
        <button aria-label="Zoom extents"><Icon n="zoomx" /><Icon n="ndown" /></button>
        <button aria-label="Orbit"><Icon n="orbit" /><Icon n="ndown" /></button>
        <hr />
        <button aria-label="ShowMotion"><Icon n="motion" /></button>
        <Icon n="ndot" class="edge last" />
      </aside>

      <div class="mark" lang="ar" dir="rtl">مستقل</div>
    </main>

    <section class="command">
      <div class="handle"><Icon n="grip" /><button aria-label="Close command line"><Icon n="cx" /></button><button aria-label="Customize"><Icon n="wrench" /></button></div>
      <div class="entry"><Icon n="prompt" /><Icon n="sm" /><input type="text" placeholder="Type a command" aria-label="Command" /><Icon n="up" /></div>
      <div class="mark2">mostaql.com</div>
      <svg class="ucs" width="90" height="90" viewBox="0 0 90 90" fill="none" stroke="#e4e4e4"><path d="M15.500 22V72.500H66" /><path d="M17 5L23 12L29 5M23 12V18M70 58L83 71M83 58L70 71" stroke-width="1.300" /><path d="M17 59L20 70 23 60 26 70 29 59" stroke="#999" /></svg>
    </section>

    <footer class="bottom">
      <nav class="layouts">
        <button v-for="l in layouts" :key="l" :class="{ on: l === activeLayout }" @click="activeLayout = l">{{ l }}</button>
        <button class="add" aria-label="New layout"><Icon n="plus" /></button>
      </nav>
      <div class="status">
        <button v-for="(c, k) in status" :key="k" :class="{ s: c.s, glow: c.glow }" :style="{ width: c.w + 'px' }" :aria-label="c.t || c.i"><Icon v-if="c.i" :n="c.i" /><template v-else>{{ c.t }}</template></button>
      </div>
    </footer>
  </div>
</template>

<style>
body { background: #b2b2b2; overflow: hidden; }
</style>

<style scoped>
.cad { display: flex; flex-direction: column; height: 100vh; font: 12px/16px "Open Sans", "Noto Sans", sans-serif; color: #333; background: linear-gradient(#000, #000) 0 100% / 100% 60px no-repeat; }
.cad * { box-sizing: border-box; }
button, input, select { font: inherit; color: inherit; border: 0; margin: 0; padding: 0; background: none; border-radius: 0; outline: 0; }
button { display: flex; align-items: center; justify-content: center; white-space: nowrap; flex: none; }
.ico { display: block; flex: none; }
select { appearance: none; flex: 1; min-width: 0; }

.top { display: grid; grid-template: 24px 20px / 41px 1fr; background: linear-gradient(#fff 24px, #9d9d9d 24px); flex: none; }
.appbtn { grid-row: 1 / 3; height: 41px; border: 1px solid #111; background: linear-gradient(#c4c4c4, #757575); gap: 3px; padding-left: 2px; }
.titlebar { display: flex; min-width: 0; background: #fff; }
.quick { display: flex; width: 213px; height: 24px; padding-left: 5px; background: linear-gradient(#e4e4e4, #b8b8b8); border-bottom: 1px solid #777; border-right: 1px solid #999; }
.title { flex: 1; display: flex; justify-content: center; gap: 10px; line-height: 24px; color: #111; white-space: nowrap; }
.info { display: flex; width: 445px; background: linear-gradient(#e4e4e4, #b4b4b4); border-bottom: 1px solid #777; border-top: 1px solid #999; }
.info input { width: 180px; border: 1px solid #000; background: #fff; padding: 0 2px; font-style: italic; line-height: 18px; }
.info input::placeholder { color: #666; opacity: 1; }
.w14 { width: 14px; }
.w24 { width: 24px; }
.w36 { width: 36px; gap: 5px; }
.w40 { width: 40px; gap: 6px; }
.line { border-left: 1px solid #aaa; margin-left: 5px; }
.sign { width: 120px; gap: 5px; padding: 0 4px 0 3px; color: #222; }
.sign span { flex: 1; text-align: left; }
.win { display: flex; width: 163px; padding-left: 23px; }
.win button { width: 46px; height: 20px; }
.menu { display: flex; padding-left: 5px; color: #1c1c22; }
.menu button { height: 17px; margin-top: 2px; }
.menu .on { background: linear-gradient(#e4e4e4, #fff); border: 1px solid #eee; border-bottom: 0; height: 18px; }
.menu .mini { gap: 6px; margin-left: 20px; }

.ribbon { display: flex; flex: none; height: 100px; background: linear-gradient(#e6e6e6, #a0a0a0); border-bottom: 2px solid #ececec; }
.panel { display: flex; flex-direction: column; flex: none; background: #fff; border-right: 1px solid #a4a4a4; }
.body { display: flex; flex: 1; padding-top: 5px; }
.panel footer { display: flex; align-items: center; justify-content: center; gap: 7px; height: 18px; margin: 0 1px; padding-bottom: 1px; background: #efefef; border-top: 1px solid #cfcfcf; position: relative; }
.panel .left { padding-right: 8px; }
.launch { position: absolute; right: 3px; top: 6px; }
.draw { width: 226px; }
.modify { width: 250px; }
.annotation { width: 188px; }
.layer { width: 274px; }
.block { width: 160px; }
.props { width: 265px; }
.groups { width: 70px; }
.utils { width: 97px; }
.clip { width: 80px; }
.view { width: 61px; border-right: 0; }
.big { flex-direction: column; justify-content: flex-start; padding-top: 2px; line-height: 15px; text-align: center; height: 72px; }
.big span { margin: 5px 0 3px; }
.letter { height: 32px; font-size: 37px; font-weight: 600; line-height: 32px; color: #3c3c3c; }
.b-line { width: 46px; }
.b-poly { width: 42px; }
.b-circle { width: 56px; }
.b-arc { width: 36px; }
.b-text { width: 46px; }
.b-dim { width: 60px; margin-right: 6px; }
.b-layer { width: 65px; margin-right: -2px; }
.b-insert { width: 44px; }
.b-match { width: 65px; }
.b-group { width: 43px; padding-left: 1px; }
.b-measure { width: 72px; }
.b-paste { width: 54px; }
.b-base { width: 61px; }
.col { display: flex; flex-direction: column; }
.grow { flex: 1; }
.small { height: 24px; justify-content: flex-start; gap: 5px; }
.small span + .ico { margin-left: 2px; }
.split { gap: 9px; }
.sqr { width: 24px; height: 22px; margin: 0 0 2px; justify-content: center; }
.pressed { background: #b9dbf5; border: 1px solid #1a70c4; }
.draw .col { padding-left: 7px; }
.modgrid { display: grid; grid-template: repeat(3, 24px) / 72px 69px 75px 16px; padding-left: 7px; }
.combo { display: flex; align-items: center; height: 22px; flex: 1; border: 1px solid #c8c8c8; background: linear-gradient(#f2f2f2, #fff); padding-right: 2px; }
.layers { flex: none; margin: 1px 2px 1px 0; padding-left: 5px; gap: 4px; }
.swatch { width: 14px; height: 14px; background: #fff; border: 1px solid #000; flex: none; }
.wide { width: 16px; height: 16px; border-color: #999; margin: 0 10px 0 12px; }
.rule { width: 59px; height: 1px; background: #000; margin: 0 2px 0 8px; flex: none; }
.dark { color: #000; }
.laygrid { display: grid; grid-template: repeat(2, 24px) / 24px 24px 24px 24px 1fr; padding-left: 4px; }
.prop { display: flex; align-items: center; height: 24px; gap: 2px; padding-right: 1px; }

.files { display: flex; align-items: flex-end; flex: none; height: 29px; padding: 0 16px; background: #b2b2b2; border-bottom: 5px solid #f0f0f0; color: #666; }
.file { position: relative; display: flex; align-items: center; height: 21px; padding: 2px 5px 0 14px; flex: none; z-index: 0; }
.file::before, .file::after { content: ""; position: absolute; z-index: -1; inset: 0 40% 0 3px; background: linear-gradient(#e6e6e6, #d6d6d6); border-radius: 7px 0 0 0; transform: skewX(-20deg); }
.file::after { inset: 0 -3px 0 40%; border-radius: 0 9px 0 0; transform: skewX(20deg); border-right: 1px solid #c4c4c4; }
.file.on { color: #000; z-index: 1; padding-left: 16px; }
.file.on::before, .file.on::after { background: linear-gradient(#fff, #f0f0f0); border: 0; }
.name { flex: 1; justify-content: flex-start; min-width: 0; }
.close { width: 8px; }
.files .add { width: 22px; height: 15px; margin: 0 0 2px 12px; background: #e6e6e6; border-radius: 2px 10px 2px 8px; }

.space { position: relative; flex: 1; min-height: 0; background: #000; }
.viewlabel { display: flex; padding: 6px 3px; color: #ddd; }
.docwin { position: absolute; right: 19px; top: 10px; display: flex; gap: 10px; }
.sheet { position: absolute; left: calc(50% - 196px); top: 71px; width: 431px; height: 608px; border: 1px solid #eee; }
.sheet table { width: 429px; height: 81px; border-collapse: collapse; table-layout: fixed; font: 10px/10px "Liberation Sans", Arial, sans-serif; color: #fff; }
.sheet td { height: 16px; padding: 2px 0 0 10px; border-left: 1px solid #eee; border-bottom: 1px solid #eee; white-space: nowrap; }
.sheet .c0 { width: 81px; border-left: 0; }
.sheet .c1 { width: 84px; padding-left: 8px; }
.sheet .tight { padding-left: 1px; }
.sheet .hand { font: italic 8px/10px "Liberation Sans", sans-serif; }
.sheet .c2 { width: 80px; }
.sheet .c3 { width: 101px; padding-left: 8px; }
.sheet .c4 { padding-left: 15px; }
.sheet u { display: block; width: 45px; height: 1px; margin-top: 8px; background: #eee; }
.model { position: absolute; left: -1px; top: -1px; }
.model text { text-anchor: middle; }
.note { font: 9px "Liberation Sans", Arial, sans-serif; fill: #eee; }
.head { font: 700 8px "Liberation Serif", serif; fill: #f0f; }
.cross { position: absolute; left: calc(50% + 290px); top: 229px; }
.compass { position: absolute; right: 21px; top: 36px; width: 140px; display: flex; flex-direction: column; align-items: center; gap: 17px; }
.wcs { width: 48px; height: 18px; gap: 6px; border-radius: 4px; background: #85868b; border: 1px solid #606064; color: #444; font: 11px "Liberation Sans", sans-serif; }
.navbar { position: absolute; right: 12px; top: 236px; width: 32px; height: 212px; display: flex; flex-direction: column; align-items: center; background: #3b3d3d; border: 1px solid #4c4e4e; border-radius: 3px; }
.navbar button { flex-direction: column; gap: 5px; padding: 2px 0 3px; }
.navbar hr { width: 26px; margin: 3px 0 1px; border: 0; border-top: 1px solid #5a5c5c; }
.edge { align-self: flex-end; margin: 1px 1px 6px; }
.last { margin: auto 1px 2px; }
.mark { position: absolute; left: 50%; bottom: 0; width: 240px; margin-left: -120px; height: 70px; text-align: center; font: 700 65px/70px "DejaVu Sans", sans-serif; color: #4e4e4e; white-space: nowrap; }

.command { position: relative; display: flex; flex: none; height: 30px; margin: 0 3px; border: 1px solid #555; }
.handle { display: flex; align-items: center; width: 53px; padding-left: 3px; gap: 6px; background: linear-gradient(#666, #333); }
.handle button:last-child { margin-left: 4px; }
.entry { flex: 1; display: flex; align-items: center; gap: 4px; padding: 0 4px 0 5px; background: #b2b2b2; }
.entry input { flex: 1; padding-left: 3px; font: italic 12px/20px "DejaVu Sans Mono", monospace; }
.entry input::placeholder { color: #6c6c6c; opacity: 1; }
.mark2 { position: absolute; left: 50%; top: 0; width: 230px; margin-left: -115px; text-align: center; font: 700 37px/36px "Liberation Sans", sans-serif; color: #bababa; pointer-events: none; z-index: 1; }
.ucs { position: absolute; left: -2px; bottom: -1px; pointer-events: none; }

.bottom { display: flex; justify-content: space-between; flex: none; height: 30px; background: #b2b2b2; border-bottom: 2px solid #e4e4e4; }
.layouts { display: flex; padding-left: 14px; color: #555; gap: 5px; }
.layouts button { position: relative; z-index: 0; width: 60px; height: 18px; }
.layouts button::before { content: ""; position: absolute; z-index: -1; inset: 0 1px 0 0; background: #dedede; border-radius: 0 0 4px 4px; clip-path: polygon(0 0, 100% 0, 92% 100%, 8% 100%); }
.layouts .on { width: 54px; color: #000; font-weight: 700; }
.layouts .on::before { background: #fff; }
.layouts .add { width: 22px; height: 16px; }
.layouts .add::before { inset: 0; }
.status { display: flex; background: #e6e6e6; color: #000; border-top: 1px solid #f2f2f2; }
.status button { height: 25px; }
.status .s { border-right: 2px solid #f4f4f4; }
.glow .ico { background: #d6e4f5; border-radius: 4px; }
</style>
